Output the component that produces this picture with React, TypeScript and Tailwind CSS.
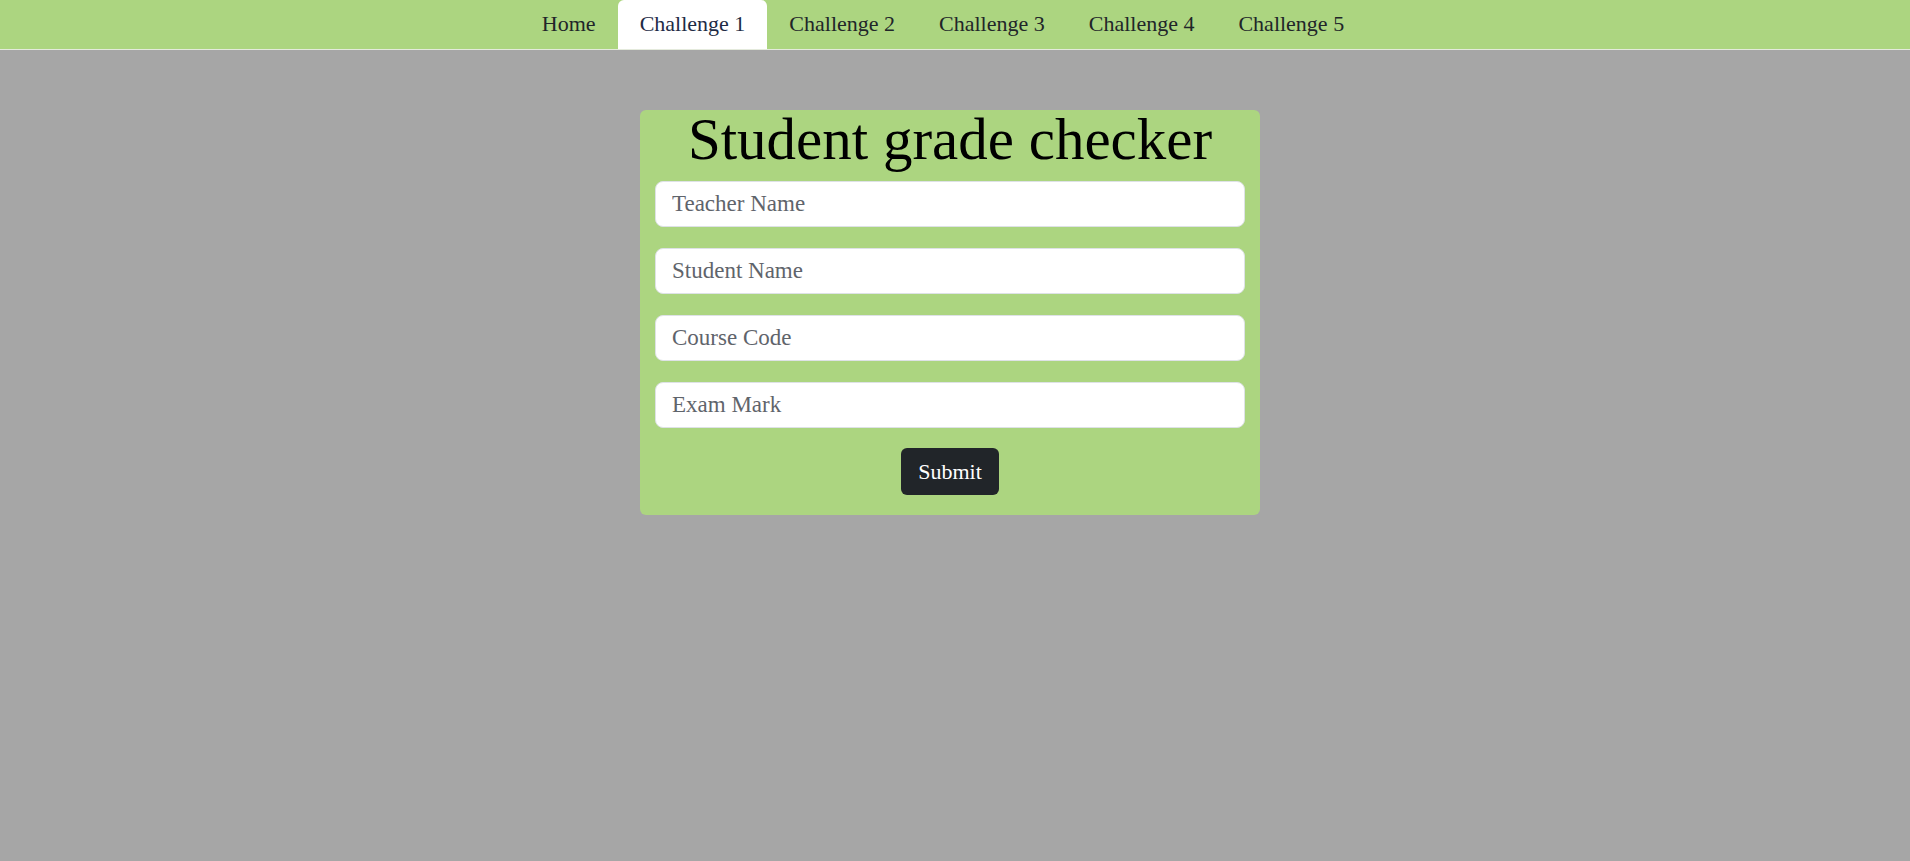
import { useState } from "react";

const tabs = ["Home", "Challenge 1", "Challenge 2", "Challenge 3", "Challenge 4", "Challenge 5"];

const fields = ["Teacher Name", "Student Name", "Course Code", "Exam Mark"];

export default function App() {
  const [active, setActive] = useState("Challenge 1");
  const [values, setValues] = useState<Record<string, string>>({});

  return (
    <div className="min-h-screen bg-[#a6a6a6] font-['Liberation_Serif',serif]">
      <nav className="flex h-[50px] justify-center border-b border-[#e4eadc] bg-[#acd580] pr-[24px]">
        {tabs.map((t) => (
          <button
            key={t}
            onClick={() => setActive(t)}
            className={`flex h-[49px] items-center px-[22px] pb-[2px] text-[22px] ${
              t === active ? "rounded-t-[6px] bg-white text-[#1e2b45]" : "text-[#212529]"
            }`}
          >
            {t}
          </button>
        ))}
      </nav>

      <main className="flex justify-center pr-[10px] pt-[60px]">
        <form
          onSubmit={(e) => e.preventDefault()}
          className="flex w-[620px] flex-col rounded-[6px] bg-[#acd580] px-[15px] pb-[20px]"
        >
          <h1 className="mb-[12px] h-[59px] text-center text-[59px] leading-none text-black">
            Student grade checker
          </h1>

          <div className="flex flex-col gap-[21px]">
            {fields.map((f) => (
              <input
                key={f}
                placeholder={f}
                value={values[f] ?? ""}
                onChange={(e) => setValues({ ...values, [f]: e.target.value })}
                className="h-[46px] w-full rounded-[8px] border border-[#dee2e6] bg-white px-[16px] text-[23px] text-[#212529] outline-none placeholder:text-[#5f646b]"
              />
            ))}
          </div>

          <div className="mt-[20px] flex justify-center">
            <button
              type="submit"
              className="h-[47px] w-[98px] rounded-[6px] bg-[#212529] text-[22px] text-white"
            >
              Submit
            </button>
          </div>
        </form>
      </main>
    </div>
  );
}
